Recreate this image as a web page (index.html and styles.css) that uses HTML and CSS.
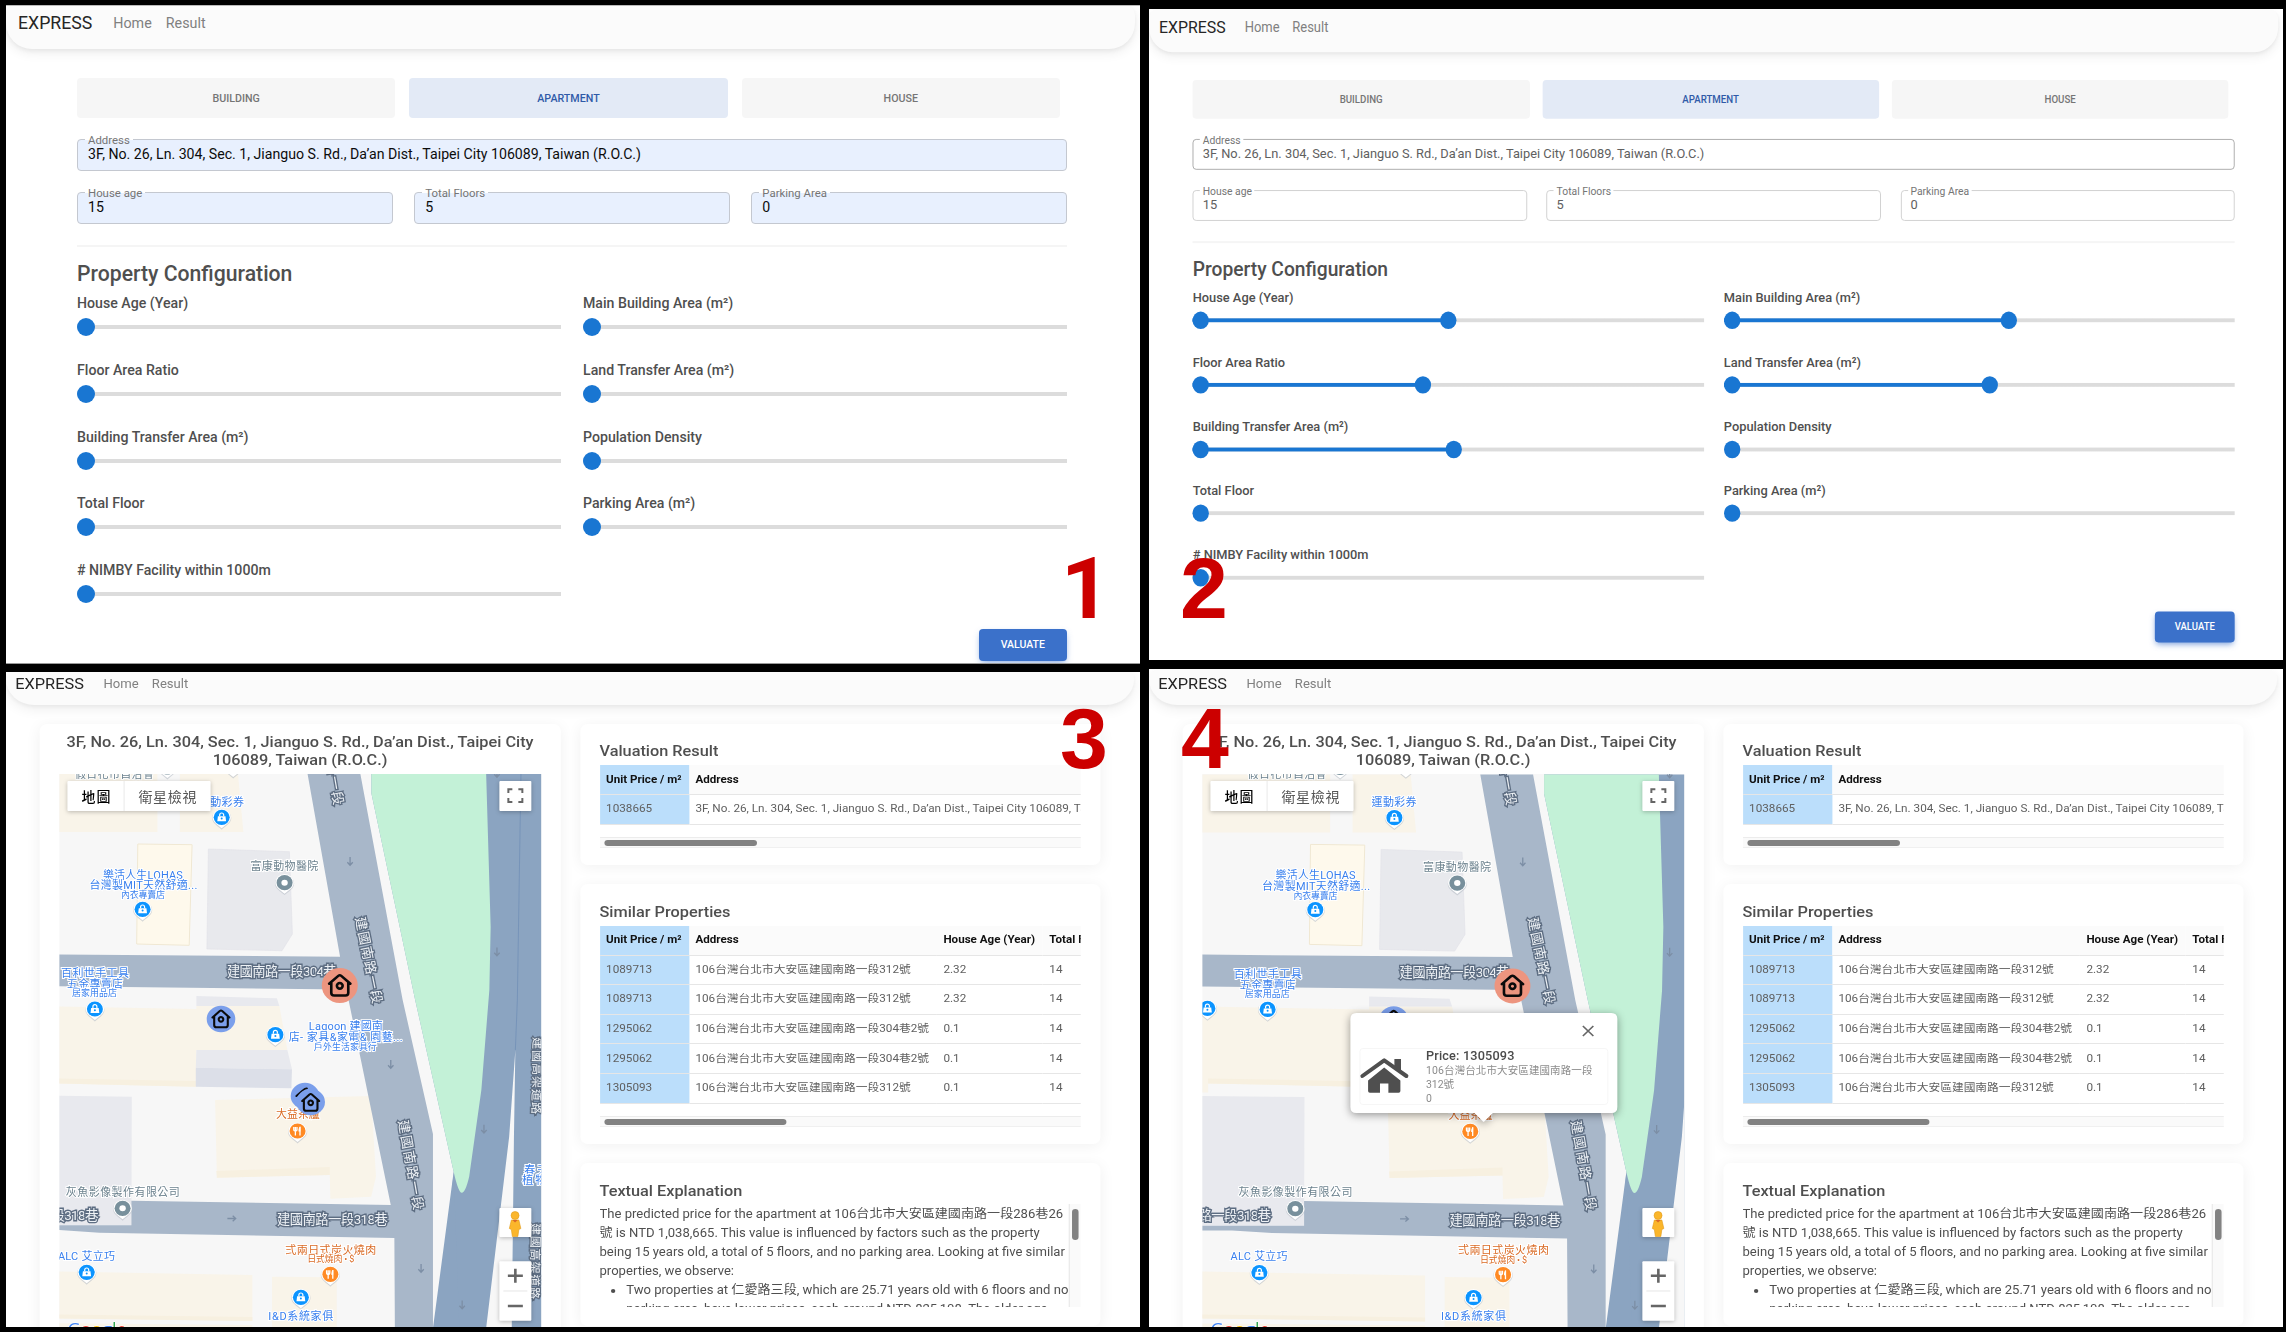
FILE: index.html
```html
<!DOCTYPE html>
<html lang="en">
<head>
<meta charset="utf-8">
<title>EXPRESS</title>
<link rel="stylesheet" href="styles.css">
</head>
<body>
<svg class="defs" width="0" height="0" aria-hidden="true">
  <defs>
    <g id="base">
      <rect x="-31" y="-1" width="530" height="556" fill="#f7f7f7"/>
      <g fill="#f9f4e9">
        <path d="M-31 0H98V58H-31zM120.500 0H178.600L184 58H120.500z"/>
        <path d="M-31 232L137 235V232H220L228 276H137L136.400 312.700L-24 309V318H-31z"/>
        <path d="M155.700 326L311.800 322L316.600 402.700L311.800 422.700L271 424.700L270.400 401L157.500 403.700z"/>
        <path d="M-31 497L193 501V547L-31 544zM-31 549L193 551V554H-31zM212.600 502.700L277.400 503.300V554H212.600z"/>
      </g>
      <g fill="#f7f0e0">
        <path d="M-24 304L136.500 307V312.700L-24 309zM157 397L270.400 393V401L157.500 403.700zM-31 540L193 543V547L-31 544z"/>
      </g>
      <path d="M78.400 70L132.700 70.700L129.800 171.300L77.300 170z" fill="#fef9ec" stroke="#f0e8d3"/>
      <path d="M149 75L230 77.700L233 160L222.600 176.700L147.500 175z" fill="#e8e9ed" stroke="#e0e1e8" stroke-width=".6"/>
      <path d="M137 222L217.500 224.300L220 232H137zM137 276H228L232.600 295.300L136.400 293.700zM-31 321.500L72.400 322.700L72 451.300H-31z" fill="#e8e9ee"/>
      <path d="M136.400 293.700L232.600 295.300L232 314.300L136.400 312.700z" fill="#dcdfe8"/>
      <path d="M248.200 0H301L343.300 226L373.600 360V554H335.500L335 464L40 458.700L0 456H-31V451.300H72V426.700L331.400 431L289.600 228L287 215.500L-31 212V180.200L280.700 182.700z" fill="#a8b7c9"/>
      <path d="M312 0V19.300L355.800 226L394.300 397.700L380 554H500V0z" fill="#8ba4c1"/>
      <path d="M394.300 397.700L374.300 549L373.600 554H400z" fill="#8ba4c1"/>
      <path d="M312 0V19.300L355.800 226L394.300 397.700Q399 418.700 402.400 418.700Q406 418.700 409.800 402.700L422 316L430 216L431.300 152.700L426.800 0z" fill="#c3f1d7"/>
      <path d="M456 276L449.800 362.700L426.800 554H452.400L454.600 362.700z" fill="#f7f7f7"/>
      <path d="M461.600 0L458 226L456 276" fill="none" stroke="#7694b9"/>
      <g fill="none" stroke="#7c8ea5" stroke-width="1.300">
        <path id="dn" d="M290.700 83v8M288 88.300l2.700 3l2.700-3"/>
        <use href="#dn" x="146.900" y="90.400"/><use href="#dn" x="146.900" y="-88"/><use href="#dn" x="40.700" y="203"/><use href="#dn" x="133.900" y="267.700"/><use href="#dn" x="71" y="407"/><use href="#dn" x="112.100" y="443.400"/>
        <path d="M168 444.500h8M173.300 441.800l3 2.700l-3 2.700"/>
      </g>
    </g>
    <g id="pin">
      <path d="M-9.600 0a9.600 9 0 0 1 19.200 0c0 5-5.600 8-9.600 11.600c-4-3.600-9.600-6.600-9.600-11.600z" fill="#b9c0c8" opacity=".6" transform="translate(0 .8)"/>
      <path d="M-9.200 0a9.200 8.600 0 0 1 18.400 0c0 5-5.200 7.600-9.200 11c-4-3.400-9.200-6-9.200-11z" fill="#fff"/>
    </g>
    <g id="shop"><use href="#pin"/><ellipse rx="8" ry="7.600" fill="#0b94ff"/><path d="M-3.800-1H3.800L4.400 4H-4.400z" fill="#fff"/><path d="M-2-1V-2.300a2 2 0 0 1 4 0V-1" fill="none" stroke="#fff" stroke-width="1.200"/><circle cy="1.300" r="1" fill="#0b94ff"/></g>
    <g id="food"><use href="#pin"/><ellipse rx="8" ry="7.600" fill="#ff8a24"/><path d="M-2.200-4V4.500M2.400-4.200V4.500M-3.800-4V-1.500Q-3.800 0-2.200 0Q-.6 0-.6-1.500V-4" stroke="#fff" stroke-width="1.300" fill="none"/><path d="M2.800-4.400Q.8-3.500.9.500H2.800z" fill="#fff"/></g>
    <g id="spot"><use href="#pin"/><ellipse rx="8" ry="7.600" fill="#78909c"/><ellipse rx="3.200" ry="3" fill="#fff"/></g>
    <g id="home" fill="none" stroke="#0b0b0b" stroke-width="2.100" stroke-linecap="round" stroke-linejoin="round">
      <path d="M-8.500-1.500L-1.200-8Q0-9 1.200-8L8.500-1.500M-6.800-2.500V6Q-6.800 8.300-4.500 8.300H4.500Q6.800 8.300 6.800 6V-2.500"/><circle r="2.300" cy=".3"/>
    </g>
    <g id="controls">
      <g fill="#fff" class="ctl">
        <rect x="8" y="7" width="143.200" height="30" rx="1"/>
        <rect x="440" y="7" width="32" height="30" rx="1"/>
        <rect x="440" y="434" width="32" height="29" rx="1"/>
        <rect x="440" y="487.300" width="32" height="59.400" rx="1"/>
      </g>
      <path d="M64.700 7V37" stroke="#e9e9e9"/>
      <path d="M449 19v-3.800h4M459 15.200h4V19M463 24v4h-4M453 28h-4v-4" fill="none" stroke="#666" stroke-width="2"/>
      <path d="M444 517h24" stroke="#e6e6e6"/>
      <path d="M448.500 501.700h15M456 494.700v14M448.500 532h15" stroke="#666" stroke-width="2.600"/>
      <path d="M452 446h7.500l2 8.500l-2 1l-1 7h-5.500l-1-7l-2-1z" fill="#fbb62b" stroke="#e09a1a" stroke-width=".6"/>
      <circle cx="455.700" cy="441.500" r="4" fill="#fbb62b" stroke="#e09a1a" stroke-width=".6"/>
      <path d="M453 446h5.400l-2.700 2.500z" fill="#d9682a"/>
    </g>
  </defs>
</svg>
<main class="board">
<div class="column column--left">

<section class="panel panel--one">
 <div class="screen form-screen">
  <nav class="navbar"><span class="brand">EXPRESS</span><a>Home</a><a>Result</a></nav>
  <div class="form">
   <div class="tabs"><button>BUILDING</button><button class="active">APARTMENT</button><button>HOUSE</button></div>
   <div class="field address"><label>Address</label><span>3F, No. 26, Ln. 304, Sec. 1, Jianguo S. Rd., Da’an Dist., Taipei City 106089, Taiwan (R.O.C.)</span></div>
   <div class="fields">
    <div class="field"><label>House age</label><span>15</span></div>
    <div class="field"><label>Total Floors</label><span>5</span></div>
    <div class="field"><label>Parking Area</label><span>0</span></div>
   </div>
   <hr>
   <h2>Property Configuration</h2>
   <div class="sliders">
    <div class="row"><p>House Age (Year)</p><div class="slider"><i></i></div></div>
    <div class="row"><p>Main Building Area (m²)</p><div class="slider"><i></i></div></div>
    <div class="row"><p>Floor Area Ratio</p><div class="slider"><i></i></div></div>
    <div class="row"><p>Land Transfer Area (m²)</p><div class="slider"><i></i></div></div>
    <div class="row"><p>Building Transfer Area (m²)</p><div class="slider"><i></i></div></div>
    <div class="row"><p>Population Density</p><div class="slider"><i></i></div></div>
    <div class="row"><p>Total Floor</p><div class="slider"><i></i></div></div>
    <div class="row"><p>Parking Area (m²)</p><div class="slider"><i></i></div></div>
    <div class="row"><p># NIMBY Facility within 1000m</p><div class="slider"><i></i></div></div>
   </div>
   <button class="valuate">VALUATE</button>
  </div>
 </div>
 <b class="step">1</b>
</section>

<section class="panel panel--three">
 <div class="screen result-screen">
  <nav class="navbar"><span class="brand">EXPRESS</span><a>Home</a><a>Result</a></nav>
  <div class="result">
   <article class="card map-card">
    <h3>3F, No. 26, Ln. 304, Sec. 1, Jianguo S. Rd., Da’an Dist., Taipei City<br>106089, Taiwan (R.O.C.)</h3>
    <svg class="map" viewBox="0 0 481.500 553" preserveAspectRatio="none">
     <use href="#base"/>
     <g class="road">
      <text x="167.500" y="202.500" textLength="110">建國南路一段304巷</text>
      <text x="-72" y="445.700" textLength="111">建國南路一段318巷</text>
      <text x="217.500" y="450.500" textLength="111">建國南路一段318巷</text>
      <text transform="translate(259 -58) rotate(80)" textLength="91">建國南路一段</text>
      <text transform="translate(296 144) rotate(78.500)" textLength="88">建國南路一段</text>
      <text transform="translate(339 347) rotate(80)" textLength="91">建國南路一段</text>
     </g>
     <g class="road road--small">
      <text transform="translate(474 263) rotate(91)" textLength="77">建國高架道路</text>
      <text transform="translate(472 449) rotate(91)" textLength="76">建國高架道路</text>
     </g>
     <use href="#spot" x="108" y="-7"/><use href="#spot" x="173.800" y="-8"/>
     <use href="#shop" x="162.300" y="43.300"/><use href="#shop" x="83.200" y="135.300"/><use href="#spot" x="225.200" y="108.700"/>
     <use href="#shop" x="35.500" y="235"/><use href="#shop" x="216" y="260.700"/><use href="#food" x="238.200" y="357"/>
     <use href="#spot" x="63.200" y="434.300"/><use href="#shop" x="27.300" y="498.300"/><use href="#food" x="271" y="500.300"/><use href="#shop" x="241.500" y="523.300"/>
     <g class="poi">
      <text x="162" y="31.700" textLength="45">運動彩券</text>
      <text x="83.500" y="105" textLength="80">樂活人生LOHAS</text>
      <text x="84" y="115.500" textLength="108">台灣製MIT天然舒適...</text>
      <text class="sub" x="83.500" y="124.500" textLength="44">內衣專賣店</text>
      <text x="35.600" y="203.500" textLength="68">百利世手工具</text>
      <text x="35.600" y="214.300" textLength="56">五金專賣店</text>
      <text class="sub" x="35.200" y="222.500" textLength="45">居家用品店</text>
      <text x="286.500" y="256.500" textLength="74">Lagoon 建國南</text>
      <text x="286.300" y="267" textLength="114">店- 家具&amp;家電&amp; 園藝...</text>
      <text class="sub" x="286" y="276" textLength="63">戶外生活家具行</text>
      <text x="27" y="485.700" textLength="57">ALC 艾立巧</text>
      <text x="241.400" y="546" textLength="65">I&amp;D系統家俱</text>
      <text x="477" y="399.700" textLength="24">春天</text>
      <text x="475" y="409.900" textLength="24">植物</text>
     </g>
     <g class="poi poi--gray">
      <text x="55" y="3.500" textLength="79">假日花市自治會</text>
      <text x="225" y="96.500" textLength="68">富康動物醫院</text>
      <text x="63.400" y="422" textLength="114">灰魚影像製作有限公司</text>
     </g>
     <g class="poi poi--food">
      <text x="238.500" y="344.500" textLength="44">大益茶廬</text>
      <text x="271.400" y="480" textLength="91">弍兩日式炭火燒肉</text>
      <text class="sub" x="271.400" y="488.500" textLength="47">日式燒肉 • $</text>
     </g>
     <g><ellipse cx="280.400" cy="211.500" rx="18" ry="17.500" fill="#ed957f"/><use href="#home" transform="translate(280.400 211.500) scale(1.250 1.200)"/></g>
     <g fill="#7b9feb"><ellipse cx="161.600" cy="245" rx="14.300" ry="13.200"/><ellipse cx="245.600" cy="322" rx="14.300" ry="13.200"/></g>
     <use href="#home" x="161.600" y="245"/>
     <path d="M237 322L244 316Q246 314.200 247.500 314.500" fill="none" stroke="#0b0b0b" stroke-width="2" stroke-linecap="round"/>
     <ellipse cx="251.300" cy="328" rx="14.300" ry="13.200" fill="#7b9feb"/><use href="#home" x="251.300" y="328.500"/>
     <use href="#controls"/>
     <g class="ctl-text"><text class="on" x="36.500" y="27.600" textLength="29">地圖</text><text x="108" y="27.600" textLength="58">衛星檢視</text></g>
     <text class="google" x="8" y="562.500"><tspan fill="#4285f4">G</tspan><tspan fill="#ea4335">o</tspan><tspan fill="#fbbc05">o</tspan><tspan fill="#4285f4">g</tspan><tspan fill="#34a853">l</tspan><tspan fill="#ea4335">e</tspan></text>
    </svg>
   </article>
   <div class="stack">
    <article class="card valuation">
     <h3>Valuation Result</h3>
     <div class="scroller"><table><tr><th>Unit Price / m²</th><th>Address</th></tr><tr><td>1038665</td><td>3F, No. 26, Ln. 304, Sec. 1, Jianguo S. Rd., Da’an Dist., Taipei City 106089, Taiwan (R.O.C.)</td></tr></table></div>
     <div class="hbar"><i></i></div>
    </article>
    <article class="card similar">
     <h3>Similar Properties</h3>
     <div class="scroller"><table>
      <tr><th>Unit Price / m²</th><th>Address</th><th>House Age (Year)</th><th>Total Floor</th></tr>
      <tr><td>1089713</td><td>106台灣台北市大安區建國南路一段312號</td><td>2.32</td><td>14</td></tr>
      <tr><td>1089713</td><td>106台灣台北市大安區建國南路一段312號</td><td>2.32</td><td>14</td></tr>
      <tr><td>1295062</td><td>106台灣台北市大安區建國南路一段304巷2號</td><td>0.1</td><td>14</td></tr>
      <tr><td>1295062</td><td>106台灣台北市大安區建國南路一段304巷2號</td><td>0.1</td><td>14</td></tr>
      <tr><td>1305093</td><td>106台灣台北市大安區建國南路一段312號</td><td>0.1</td><td>14</td></tr>
     </table></div>
     <div class="hbar hbar--wide"><i></i></div>
    </article>
    <article class="card textual">
     <h3>Textual Explanation</h3>
     <div class="prose"><div class="copy">
      <p>The predicted price for the apartment at 106台北市大安區建國南路一段286巷26<br>號 is NTD 1,038,665. This value is influenced by factors such as the property<br>being 15 years old, a total of 5 floors, and no parking area. Looking at five similar<br>properties, we observe:</p>
      <ul><li>Two properties at 仁愛路三段, which are 25.71 years old with 6 floors and no<br>parking area, have lower prices, each around NTD 825,108. The older age</li></ul>
     </div><div class="vbar"><i></i></div></div>
    </article>
   </div>
  </div>
 </div>
 <b class="step">3</b>
</section>
</div>

<div class="column column--right">
<section class="panel panel--two">
 <div class="screen form-screen">
  <nav class="navbar"><span class="brand">EXPRESS</span><a>Home</a><a>Result</a></nav>
  <div class="form">
   <div class="tabs"><button>BUILDING</button><button class="active">APARTMENT</button><button>HOUSE</button></div>
   <div class="field address"><label>Address</label><span>3F, No. 26, Ln. 304, Sec. 1, Jianguo S. Rd., Da’an Dist., Taipei City 106089, Taiwan (R.O.C.)</span></div>
   <div class="fields">
    <div class="field"><label>House age</label><span>15</span></div>
    <div class="field"><label>Total Floors</label><span>5</span></div>
    <div class="field"><label>Parking Area</label><span>0</span></div>
   </div>
   <hr>
   <h2>Property Configuration</h2>
   <div class="sliders">
    <div class="row"><p>House Age (Year)</p><div class="slider range" style="--v:50%"><i></i></div></div>
    <div class="row"><p>Main Building Area (m²)</p><div class="slider range" style="--v:55.700%"><i></i></div></div>
    <div class="row"><p>Floor Area Ratio</p><div class="slider range" style="--v:45.100%"><i></i></div></div>
    <div class="row"><p>Land Transfer Area (m²)</p><div class="slider range" style="--v:52.100%"><i></i></div></div>
    <div class="row"><p>Building Transfer Area (m²)</p><div class="slider range" style="--v:51%"><i></i></div></div>
    <div class="row"><p>Population Density</p><div class="slider"><i></i></div></div>
    <div class="row"><p>Total Floor</p><div class="slider"><i></i></div></div>
    <div class="row"><p>Parking Area (m²)</p><div class="slider"><i></i></div></div>
    <div class="row"><p># NIMBY Facility within 1000m</p><div class="slider"><i></i></div></div>
   </div>
   <button class="valuate">VALUATE</button>
  </div>
 </div>
 <b class="step">2</b>
</section>

<section class="panel panel--four">
 <div class="screen result-screen">
  <nav class="navbar"><span class="brand">EXPRESS</span><a>Home</a><a>Result</a></nav>
  <div class="result">
   <article class="card map-card">
    <h3>3F, No. 26, Ln. 304, Sec. 1, Jianguo S. Rd., Da’an Dist., Taipei City<br>106089, Taiwan (R.O.C.)</h3>
    <svg class="map" viewBox="0 0 481.500 553" preserveAspectRatio="none">
     <g transform="translate(29.700 .4)">
     <use href="#base"/>
     <g class="road">
      <text x="167.500" y="202.500" textLength="110">建國南路一段304巷</text>
      <text x="-72" y="445.700" textLength="111">建國南路一段318巷</text>
      <text x="217.500" y="450.500" textLength="111">建國南路一段318巷</text>
      <text transform="translate(259 -58) rotate(80)" textLength="91">建國南路一段</text>
      <text transform="translate(296 144) rotate(78.500)" textLength="88">建國南路一段</text>
      <text transform="translate(339 347) rotate(80)" textLength="91">建國南路一段</text>
     </g>
     <use href="#spot" x="108" y="-7"/><use href="#spot" x="173.800" y="-8"/>
     <use href="#shop" x="162.300" y="43.300"/><use href="#shop" x="83.200" y="135.300"/><use href="#spot" x="225.200" y="108.700"/>
     <use href="#shop" x="-24.700" y="234"/><use href="#shop" x="35.500" y="235"/><use href="#food" x="238.200" y="357"/>
     <use href="#spot" x="63.200" y="434.300"/><use href="#shop" x="27.300" y="498.300"/><use href="#food" x="271" y="500.300"/><use href="#shop" x="241.500" y="523.300"/>
     <g class="poi">
      <text x="162" y="31.700" textLength="45">運動彩券</text>
      <text x="83.500" y="105" textLength="80">樂活人生LOHAS</text>
      <text x="84" y="115.500" textLength="108">台灣製MIT天然舒適...</text>
      <text class="sub" x="83.500" y="124.500" textLength="44">內衣專賣店</text>
      <text x="35.600" y="203.500" textLength="68">百利世手工具</text>
      <text x="35.600" y="214.300" textLength="56">五金專賣店</text>
      <text class="sub" x="35.200" y="222.500" textLength="45">居家用品店</text>
      <text x="27" y="485.700" textLength="57">ALC 艾立巧</text>
      <text x="241.400" y="546" textLength="65">I&amp;D系統家俱</text>
     </g>
     <g class="poi poi--gray">
      <text x="55" y="3.500" textLength="79">假日花市自治會</text>
      <text x="225" y="96.500" textLength="68">富康動物醫院</text>
      <text x="63.400" y="422" textLength="114">灰魚影像製作有限公司</text>
     </g>
     <g class="poi poi--food">
      <text x="238.500" y="344.500" textLength="44">大益茶廬</text>
      <text x="271.400" y="480" textLength="91">弍兩日式炭火燒肉</text>
      <text class="sub" x="271.400" y="488.500" textLength="47">日式燒肉 • $</text>
     </g>
     <ellipse cx="280.400" cy="211.500" rx="18" ry="17.500" fill="#ed957f"/><use href="#home" transform="translate(280.400 211.500) scale(1.250 1.200)"/>
     <ellipse cx="161.600" cy="245" rx="14.300" ry="13.200" fill="#7b9feb"/><use href="#home" x="161.600" y="245"/>
     </g>
     <use href="#controls"/>
     <g class="ctl-text"><text class="on" x="36.500" y="27.600" textLength="29">地圖</text><text x="108" y="27.600" textLength="58">衛星檢視</text></g>
     <text class="google" x="8" y="562.500"><tspan fill="#4285f4">G</tspan><tspan fill="#ea4335">o</tspan><tspan fill="#fbbc05">o</tspan><tspan fill="#4285f4">g</tspan><tspan fill="#34a853">l</tspan><tspan fill="#ea4335">e</tspan></text>
     <g class="popup">
      <path class="bubble" d="M154 239H409Q415 239 415 245V333Q415 339 409 339H290.500L281.300 348L272 339H154Q148 339 148 333V245Q148 239 154 239z" fill="#fff"/>
      <path d="M380.500 252l10.500 10M391 252l-10.500 10" stroke="#666" stroke-width="1.700"/>
      <rect x="157.500" y="274.500" width="248" height="56" rx="3" fill="none" stroke="#f6f6f6"/>
      <path d="M181.800 293.500L198 306.500V317Q198 318.700 196.300 318.700H186V309.500H177.600V318.700H167.500Q165.700 318.700 165.700 317V306.500z" fill="#4f4f4f"/>
      <path d="M160 302L181.800 286.300L204 302" fill="none" stroke="#4f4f4f" stroke-width="4" stroke-linecap="round" stroke-linejoin="round"/>
      <path d="M192 285H198.600V298.500L192 293.500z" fill="#4f4f4f"/>
      <text class="price" x="223.600" y="285.700" textLength="88.500">Price: 1305093</text>
      <text x="223.600" y="300" textLength="166.500">106台灣台北市大安區建國南路一段</text>
      <text x="223.600" y="313.700" textLength="28">312號</text>
      <text x="223.600" y="327.700">0</text>
     </g>
    </svg>
   </article>
   <div class="stack">
    <article class="card valuation">
     <h3>Valuation Result</h3>
     <div class="scroller"><table><tr><th>Unit Price / m²</th><th>Address</th></tr><tr><td>1038665</td><td>3F, No. 26, Ln. 304, Sec. 1, Jianguo S. Rd., Da’an Dist., Taipei City 106089, Taiwan (R.O.C.)</td></tr></table></div>
     <div class="hbar"><i></i></div>
    </article>
    <article class="card similar">
     <h3>Similar Properties</h3>
     <div class="scroller"><table>
      <tr><th>Unit Price / m²</th><th>Address</th><th>House Age (Year)</th><th>Total Floor</th></tr>
      <tr><td>1089713</td><td>106台灣台北市大安區建國南路一段312號</td><td>2.32</td><td>14</td></tr>
      <tr><td>1089713</td><td>106台灣台北市大安區建國南路一段312號</td><td>2.32</td><td>14</td></tr>
      <tr><td>1295062</td><td>106台灣台北市大安區建國南路一段304巷2號</td><td>0.1</td><td>14</td></tr>
      <tr><td>1295062</td><td>106台灣台北市大安區建國南路一段304巷2號</td><td>0.1</td><td>14</td></tr>
      <tr><td>1305093</td><td>106台灣台北市大安區建國南路一段312號</td><td>0.1</td><td>14</td></tr>
     </table></div>
     <div class="hbar hbar--wide"><i></i></div>
    </article>
    <article class="card textual">
     <h3>Textual Explanation</h3>
     <div class="prose"><div class="copy">
      <p>The predicted price for the apartment at 106台北市大安區建國南路一段286巷26<br>號 is NTD 1,038,665. This value is influenced by factors such as the property<br>being 15 years old, a total of 5 floors, and no parking area. Looking at five similar<br>properties, we observe:</p>
      <ul><li>Two properties at 仁愛路三段, which are 25.71 years old with 6 floors and no<br>parking area, have lower prices, each around NTD 825,108. The older age</li></ul>
     </div><div class="vbar"><i></i></div></div>
    </article>
   </div>
  </div>
 </div>
 <b class="step">4</b>
</section>
</div>
</main>
</body>
</html>
```
FILE: styles.css
```css
* { box-sizing: border-box; }

body {
  margin: 0;
  background: #000;
  color: #4f4f4f;
  font-family: Roboto, "Noto Sans CJK TC", sans-serif;
  overflow: hidden;
}

h2, h3, p, ul { margin: 0; padding: 0; }
button { border: 0; padding: 0; font: inherit; }
.defs { position: absolute; }

.board {
  display: flex;
  gap: 9px;
  width: 2286px;
  height: 1332px;
  padding-left: 6px;
}
.column { display: flex; flex-direction: column; width: 1134px; }
.column--left { gap: 8px; padding-top: 5px; }
.column--right { gap: 9px; padding-top: 9px; }

.panel { position: relative; background: #fff; overflow: hidden; flex: none; }
.panel--one { height: 659px; border-top: 1px solid #bbb; border-bottom: 1px solid #999; }
.panel--two { height: 651px; }
.panel--three { height: 655px; }
.panel--four { height: 658px; }

.screen { transform-origin: 0 0; }
.panel--one .screen { margin-top: -1px; }
.panel--two .screen { width: 1250.300px; transform: translateY(.7px) scale(.907, .9645); }
.result-screen { width: 1040.400px; transform: scaleX(1.09); }
.panel--three .screen { margin-top: -3px; }

/* step numbers laid over the screens */
.step {
  position: absolute;
  font: bold 86px/84px "Liberation Sans", Arial, sans-serif;
  color: #c00;
}
.panel--one .step { left: 1055px; top: 541px; font-family: Roboto, sans-serif; }
.panel--two .step { left: 31px; top: 537px; }
.panel--three .step { left: 1054px; top: 24px; }
.panel--four .step { left: 32px; top: 27px; }

/* navigation */
.navbar {
  display: flex;
  align-items: center;
  width: calc(100% - 5px);
  height: 44px;
  padding: 0 0 8px 12px;
  background: #fbfbfb;
  border-radius: 10px 10px 26px 26px;
  box-shadow: 0 4px 12px rgba(0, 0, 0, .07), 0 2px 4px rgba(0, 0, 0, .05);
  font-size: 14.300px;
  color: #808080;
}
.navbar a { margin-right: 14px; }
.brand { font-size: 17.700px; color: #262626; margin-right: 21px; }
.panel--two .navbar { padding-left: 11px; }
.panel--two .brand { font-size: 17.500px; }
.result-screen .navbar { height: 36px; padding: 0 0 6px 8.500px; font-size: 12px; }
.result-screen .brand { font-size: 15px; margin-right: 18px; }
.result-screen .navbar a { margin-right: 12px; }

/* input form */
.form { display: flex; flex-direction: column; padding: 29px 73px 0 71px; }
.panel--two .form { padding: 29px 53px 0 48.200px; }
.tabs { display: flex; gap: 14px; margin-right: 7px; }
.tabs button {
  flex: 1;
  height: 40px;
  border-radius: 4px;
  background: #f6f6f6;
  color: #757575;
  font-size: 10.700px;
  font-weight: 500;
}
.tabs .active { background: #e3eaf6; color: #2f5aa8; }
.field {
  position: relative;
  flex: 1;
  height: 32px;
  border: 1px solid #c4c8d0;
  border-radius: 4px;
  padding: 0 10px;
  background: #e8f0fe;
  color: #0c0c0c;
  font-size: 14.150px;
  line-height: 29px;
}
.address { flex: none; margin: 21px 0 21px; }
.field label {
  position: absolute;
  left: 7px;
  top: -7px;
  padding: 0 3px;
  background: linear-gradient(#fff 50%, #e8f0fe 50%);
  color: #757575;
  font-size: 11.400px;
  line-height: 14px;
}
.panel--two .field { background: #fff; border-color: #cfcfcf; color: #606060; }
.panel--two .address { border-color: #a8a8a8; }
.panel--two .field label { background: #fff; }
.fields { display: flex; gap: 21.500px; }
hr { width: 100%; height: 2px; border: 0; margin: 21px 0 15px; background: #f5f5f5; }
h2 { font-size: 21.200px; line-height: 24px; font-weight: 500; }
.sliders {
  display: grid;
  grid-template-columns: 1fr 1fr;
  gap: 24.800px 22px;
  margin-top: 8px;
}
.row p { font-size: 14.150px; line-height: 18px; font-weight: 500; margin-bottom: 6px; }
.slider {
  position: relative;
  height: 18px;
  background: linear-gradient(#dcdcdc, #dcdcdc) 0 50% / 100% 4px no-repeat;
}
.slider i, .slider::after {
  position: absolute;
  left: 0;
  top: 0;
  width: 18px;
  height: 18px;
  border-radius: 50%;
  background: #1976d2;
}
.range { background: linear-gradient(#1976d2, #1976d2) 0 50% / var(--v) 4px no-repeat, linear-gradient(#dcdcdc, #dcdcdc) 0 50% / 100% 4px no-repeat; }
.range::after { content: ""; left: calc(var(--v) - 9px); }
.valuate {
  align-self: flex-end;
  width: 88.500px;
  height: 32px;
  margin-top: 25.500px;
  border-radius: 4px;
  background: #3b71ca;
  box-shadow: 0 3px 7px -2px rgba(59, 113, 202, .7);
  color: #fff;
  font-size: 10.500px;
  font-weight: 500;
}

/* result page */
.result { display: flex; gap: 18px; padding: 18.500px 0 0 31px; }
.card {
  background: #fff;
  border-radius: 7px;
  box-shadow: 0 2px 14px rgba(0, 0, 0, .06);
}
.card h3 { font-size: 14.950px; line-height: 18px; font-weight: 500; }
.map-card { width: 477.500px; height: 640px; padding: 9.500px 18px 0; }
.map-card h3 { text-align: center; height: 41px; white-space: nowrap; }
.map { display: block; width: 441.700px; height: 553px; }
.stack { display: flex; flex-direction: column; gap: 19.500px; width: 477.500px; }
.stack .card { padding: 18.500px 18px 0; }
.valuation { height: 141px; }
.similar { height: 259.500px; }
.textual { height: 163px; }
.scroller { overflow: hidden; margin-top: 5px; }
table { table-layout: fixed; width: 504px; border-collapse: collapse; }
th, td {
  height: 29.600px;
  padding: 0 0 1px 6px;
  border-bottom: 1px solid #e6e6e6;
  text-align: left;
  white-space: nowrap;
  font-size: 10.750px;
  line-height: 15px;
}
th { background: #fbfbfb; color: #111; font-size: 10.650px; font-weight: 700; }
td { color: #606060; }
th:first-child, td:first-child { width: 82px; background: #bbdefb; }
.similar th:nth-child(2) { width: 227.500px; }
.similar th:nth-child(3) { width: 97.200px; }
.hbar { height: 11px; margin-top: 12px; padding: 2.500px 0 0 4.500px; background: #fafafa; border-top: 1px solid #ececec; border-bottom: 1px solid #f0f0f0; }
.hbar i { display: block; width: 140px; height: 5.500px; border-radius: 3px; background: #828282; }
.hbar--wide i { width: 167px; }
.prose { display: flex; height: 103px; margin-top: 4.500px; overflow: hidden; }
.copy { width: 430px; padding-top: 1.400px; font-size: 12px; line-height: 18.900px; white-space: nowrap; }
.copy li { margin-left: 24.500px; }
.vbar { width: 11.500px; flex: none; background: #fafafa; border-left: 1px solid #e8e8e8; padding: 5px 0 0 2.500px; }
.vbar i { display: block; width: 5.500px; height: 31px; border-radius: 3px; background: #828282; }

/* map labels */
.map text { font-family: Roboto, "Noto Sans CJK TC", sans-serif; font-size: 11px; }
.map .road text { fill: #eef2f6; stroke: #5d6d82; stroke-width: 2.800px; paint-order: stroke; font-size: 13.500px; }
.map .road--small text { font-size: 12px; }
.poi text { fill: #3a80ee; stroke: #fff; stroke-width: 2px; paint-order: stroke; text-anchor: middle; }
.map .poi .sub { font-size: 9px; }
.poi--gray text { fill: #6c828e; }
.poi--food text { fill: #da6a24; }
.ctl { filter: drop-shadow(0 1px 2px rgba(0, 0, 0, .25)); }
.map .ctl-text text { text-anchor: middle; font-size: 14px; fill: #555; }
.map .ctl-text .on { fill: #000; font-weight: 500; }
.map .google { font: 500 18px "Open Sans", sans-serif; stroke: #fff; stroke-width: 1px; paint-order: stroke; }
.bubble { filter: drop-shadow(0 2px 4px rgba(0, 0, 0, .4)); }
.map .popup text { font-size: 10.500px; fill: #8c8c8c; }
.map .popup .price { font-size: 12.700px; font-weight: 500; fill: #4a4a4a; }
```
